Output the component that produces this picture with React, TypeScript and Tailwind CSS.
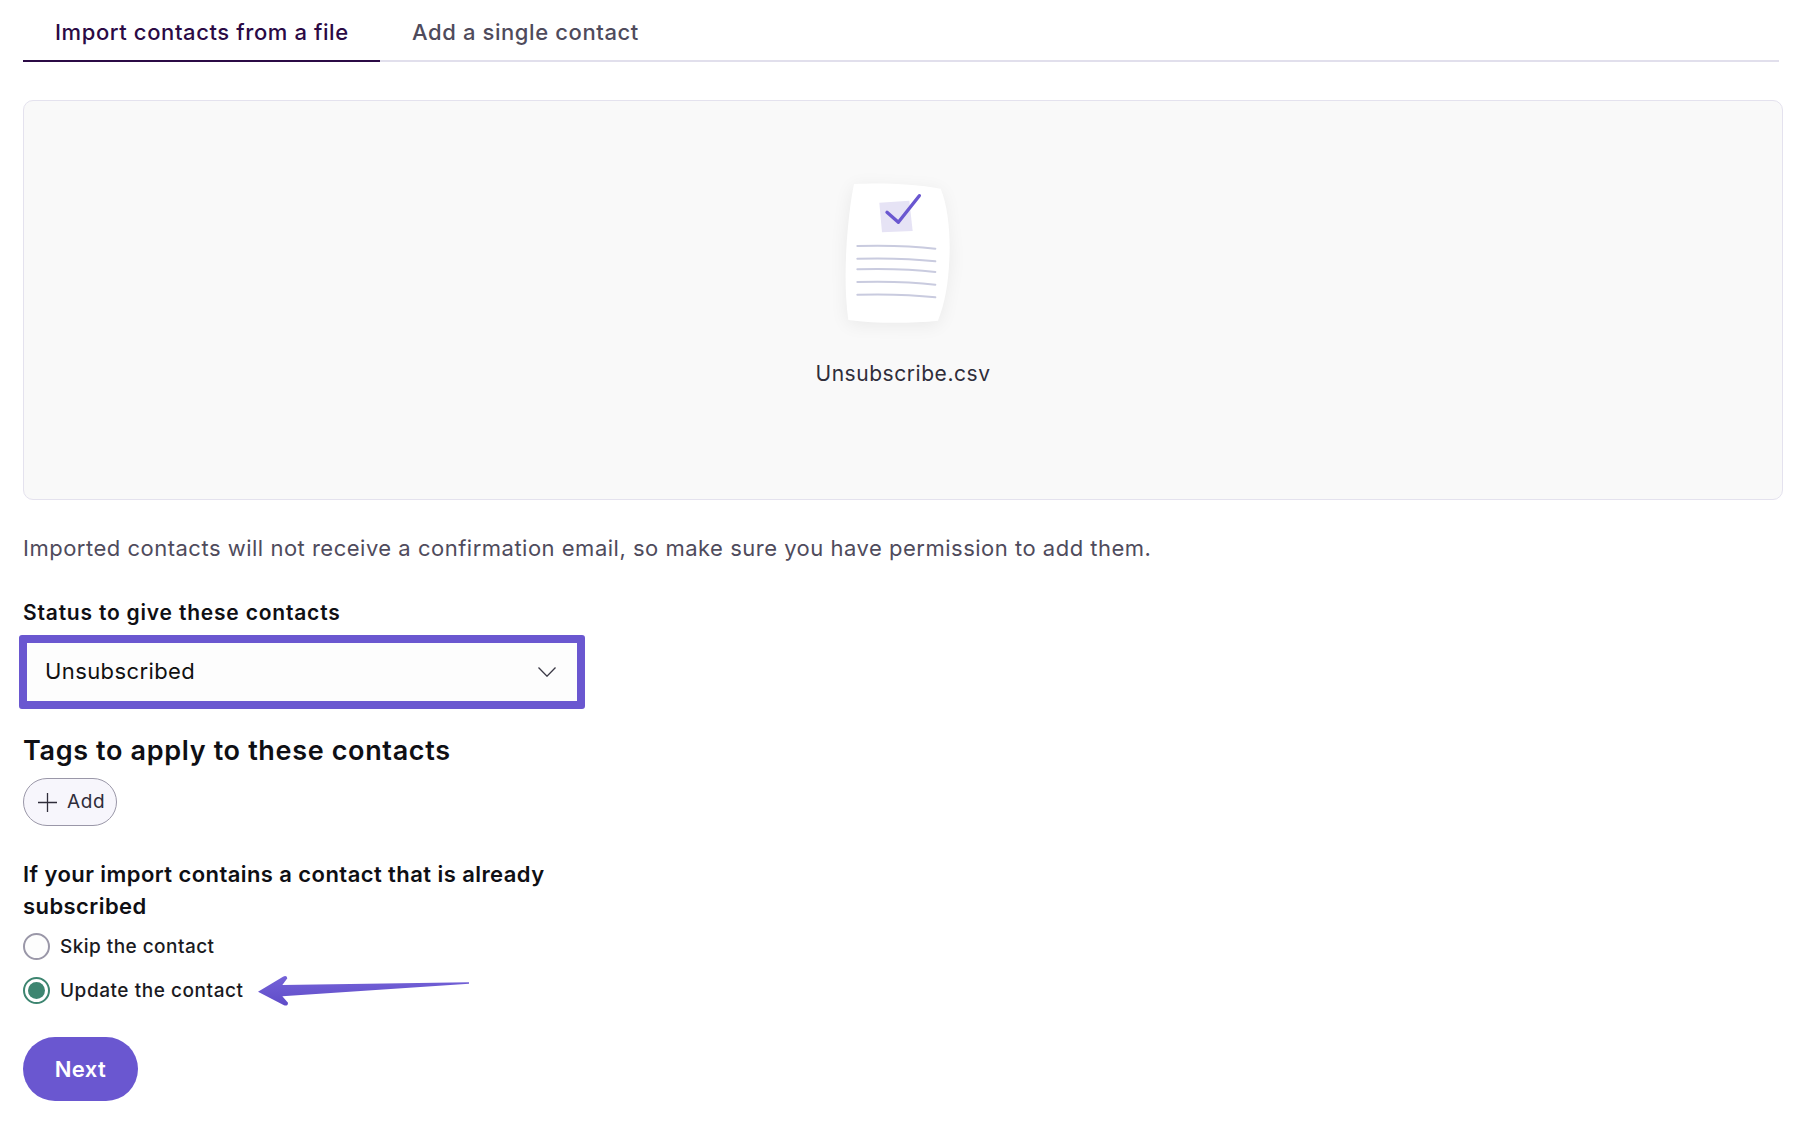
export default function App() {
  return (
    <div className="h-[1122px] w-[1806px] overflow-hidden bg-white pl-[23px] font-['Inter','Liberation_Sans',sans-serif] text-[#0f0f14]">
      {/* Tabs */}
      <div className="flex h-[62px] w-[1756px] border-b-2 border-[#e1dfec]">
        <div className="-mb-[2px] flex h-[62px] w-[357px] items-center border-b-2 border-[#2b0a45] pl-[32px] pt-[5px] text-[22px] font-medium tracking-[0.6px] text-[#2b0a45]">
          Import contacts from a file
        </div>
        <div className="flex h-[60px] items-center pl-[32px] pt-[5px] text-[22px] font-medium tracking-[0.6px] text-[#4f4b5c]">
          Add a single contact
        </div>
      </div>

      {/* File card */}
      <div className="mt-[38px] flex h-[400px] w-[1760px] flex-col items-center rounded-[10px] border border-[#e4e2ee] bg-[#f9f9f9] pt-[49px]">
        <svg width="246" height="200" viewBox="0 0 738 600">
          <defs>
            <filter id="docShadow" x="-40%" y="-40%" width="180%" height="180%">
              <feGaussianBlur stdDeviation="28" />
            </filter>
          </defs>
          <path d="M222 112 L482 126 L508 330 L474 522 L205 520 L200 280 Z" fill="#000" opacity="0.07" filter="url(#docShadow)" />
          <path d="M222 102 C300 98 400 100 482 116 C505 170 512 260 508 330 C505 400 495 460 474 512 C400 520 290 522 205 510 C195 440 195 360 200 280 C205 210 212 150 222 102 Z" fill="#fff" />
          <path d="M298 158 L388 152 L398 243 L306 247 Z" fill="#e6e3f5" />
          <path d="M321 187 L355 217 L418 137" fill="none" stroke="#6a57d0" strokeWidth="10" strokeLinecap="round" strokeLinejoin="round" />
          <g fill="none" stroke="#c9cbdf" strokeWidth="6" strokeLinecap="round">
            <path d="M232 288 C320 286 400 288 466 296" />
            <path d="M232 326 C320 324 400 326 466 334" />
            <path d="M232 358 C320 356 400 358 466 366" />
            <path d="M232 396 C320 394 400 396 466 404" />
            <path d="M232 434 C320 432 400 434 466 442" />
          </g>
        </svg>
        <div className="mt-[10px] text-[21px] leading-[28px] tracking-[0.55px] text-[#2f2d3a]">Unsubscribe.csv</div>
      </div>

      {/* Notice */}
      <p className="mt-[34px] text-[22px] leading-[28px] tracking-[0.5px] text-[#4f4b5c]">
        Imported contacts will not receive a confirmation email, so make sure you have permission to add them.
      </p>

      {/* Status */}
      <div className="mt-[37px] text-[21px] font-semibold leading-[28px] tracking-[0.8px]">Status to give these contacts</div>
      <div className="-ml-[4px] mt-[8px] flex h-[74px] w-[566px] items-center justify-between rounded-[3px] border-[8px] border-[#6a57d0] bg-[#fdfdfd] pb-[2px] pl-[18px] pr-[21px]">
        <span className="text-[22px] tracking-[0.4px] text-[#111]">Unsubscribed</span>
        <svg className="mt-[2px]" width="18" height="10" viewBox="0 0 18 10" fill="none" stroke="#3b3946" strokeWidth="1.3">
          <path d="M0.5 0.5 L9 9.2 L17.5 0.5" />
        </svg>
      </div>

      {/* Tags */}
      <h2 className="mt-[26px] text-[27px] font-semibold leading-[32px] tracking-[0.65px]">Tags to apply to these contacts</h2>
      <button className="mt-[11px] flex h-[48px] w-[94px] items-center gap-[10px] rounded-[24px] border border-[#9a97a8] bg-[#f7f6fc] pl-[14px] text-[19px] tracking-[0.6px] text-[#2f2d3a]">
        <svg width="19" height="19" viewBox="0 0 19 19" stroke="#2f2d3a" strokeWidth="1.3">
          <path d="M0 9.5 H19 M9.5 0 V19" />
        </svg>
        Add
      </button>

      {/* Existing contact */}
      <div className="mt-[32px] w-[560px] text-[22px] font-semibold leading-[32px] tracking-[0.43px]">
        If your import contains a contact that is already subscribed
      </div>
      <div className="mt-[11px] flex h-[27px] items-center gap-[10px]">
        <span className="h-[27px] w-[27px] rounded-full border-2 border-[#9a97a8] bg-[#fdfdfd]" />
        <span className="pt-[2px] text-[19px] font-medium tracking-[0.45px] text-[#1a1a22]">Skip the contact</span>
      </div>
      <div className="mt-[17px] flex h-[27px] items-center">
        <span className="flex h-[27px] w-[27px] items-center justify-center rounded-full border-2 border-[#3d8570] bg-white">
          <span className="h-[17px] w-[17px] rounded-full bg-[#3d8570]" />
        </span>
        <span className="ml-[10px] pt-[2px] text-[19px] font-medium tracking-[0.55px] text-[#1a1a22]">Update the contact</span>
        <svg className="-my-[4px] ml-[13px]" width="212" height="35" viewBox="0 0 636 105">
          <defs>
            <linearGradient id="arrowFill" x1="0" y1="0" x2="0" y2="1">
              <stop offset="0" stopColor="#7563d8" />
              <stop offset="1" stopColor="#5f4cc8" />
            </linearGradient>
          </defs>
          <path d="M3 56 L78 11 Q89 5 91 16 L76 36 L636 28 L636 32 L76 70 L93 89 Q93 100 81 97 Z" fill="url(#arrowFill)" />
        </svg>
      </div>

      <button className="mt-[33px] h-[64px] w-[115px] rounded-[32px] bg-[#6a57d0] text-[22px] font-semibold tracking-[0.4px] text-white">Next</button>
    </div>
  );
}
